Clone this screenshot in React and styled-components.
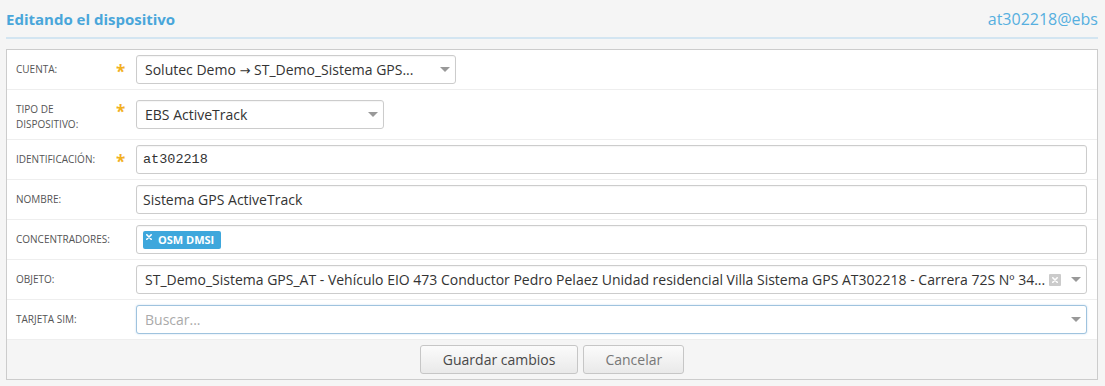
import React from 'react';
import styled, { createGlobalStyle } from 'styled-components';

const GlobalStyle = createGlobalStyle`
  html, body {
    margin: 0;
    padding: 0;
    background: #f5f5f5;
  }
  body {
    font-family: "Open Sans", "Liberation Sans", sans-serif;
  }
  * {
    box-sizing: border-box;
  }
`;

const Page = styled.div`
  width: 1092px;
  margin-left: 6px;
`;

const Header = styled.div`
  display: flex;
  justify-content: space-between;
  align-items: baseline;
  line-height: 20px;
  padding: 9px 0 8px;
  border-bottom: 2px solid #d3e5f1;
  margin-bottom: 10px;
`;

const Title = styled.h1`
  margin: 0;
  font-size: 15px;
  font-weight: 700;
  color: #49a6da;
`;

const User = styled.span`
  font-size: 16px;
  color: #56afdf;
`;

const Panel = styled.div`
  border: 1px solid #ccc;
  background: #fff;
`;

const Row = styled.div`
  display: grid;
  grid-template-columns: 100px 20px 1fr;
  align-items: center;
  min-height: 40px;
  padding: 0 10px 0 9px;
  border-bottom: 1px solid #eee;
`;

const Label = styled.label`
  align-self: start;
  padding: 12px 0 7px;
  font-size: 10px;
  line-height: 15px;
  text-transform: uppercase;
  color: #555;
`;

const Star = styled.span`
  align-self: start;
  padding-top: 13px;
  font-size: 17px;
  line-height: 17px;
  font-weight: 700;
  color: #f2b01e;
`;

const Field = styled.div`
  display: flex;
  align-items: center;
  width: ${(p) => p.$width || '100%'};
  height: 29px;
  padding: 0 ${(p) => (p.$select ? '5px' : '6px')} 0 ${(p) => (p.$select ? '8px' : '6px')};
  border: 1px solid ${(p) => (p.$focus ? '#9fc3de' : '#ccc')};
  border-radius: 3px;
  background: #fff;
  box-shadow: ${(p) =>
    p.$focus ? '0 0 2px rgba(82, 150, 210, 0.35)' : 'inset 0 1px 1px rgba(0, 0, 0, 0.04)'};
  font-size: 14px;
  color: #333;
`;

const Value = styled.span`
  flex: 1;
  min-width: 0;
  white-space: nowrap;
  overflow: hidden;
  font-family: ${(p) => (p.$mono ? '"Liberation Mono", monospace' : 'inherit')};
  font-size: ${(p) => (p.$mono ? '13.5px' : 'inherit')};
  color: ${(p) => (p.$placeholder ? '#aaa' : '#333')};
`;

const LongArrow = styled.span`
  font-family: "DejaVu Sans", sans-serif;
  font-size: 13px;
`;

const Arrow = styled.span`
  flex: none;
  width: 0;
  height: 0;
  margin-left: ${(p) => p.$gap || '8px'};
  border-left: 5px solid transparent;
  border-right: 5px solid transparent;
  border-top: 5px solid #999;
`;

const Clear = styled.span`
  flex: none;
  display: flex;
  align-items: center;
  justify-content: center;
  width: 12px;
  height: 12px;
  margin-left: 4px;
  border-radius: 1px;
  background: #cbcbcb;
`;

const Tag = styled.span`
  display: inline-flex;
  align-items: flex-start;
  height: 18px;
  padding: 0 7px 0 3px;
  border-radius: 2px;
  background: #3ea7dc;
  color: #fff;
  font-size: 11px;
  font-weight: 700;
  line-height: 18px;
`;

const TagClose = styled.span`
  display: flex;
  padding-top: 3px;
  margin-right: 6px;
`;

const Footer = styled.div`
  display: flex;
  justify-content: center;
  align-items: center;
  gap: 5px;
  height: 39px;
  background: #f5f5f5;
`;

const Button = styled.button`
  height: 29px;
  padding: 0 ${(p) => (p.$primary ? '22px' : '21px')};
  border: 1px solid #c6c6c6;
  border-radius: 3px;
  background: linear-gradient(#fbfbfb, #e9e9e9);
  font-family: "Open Sans", "Liberation Sans", sans-serif;
  font-size: 14px;
  color: ${(p) => (p.$primary ? '#484848' : '#777')};
`;

const Cross = ({ size = 6 }) => (
  <svg width={size} height={size} viewBox="0 0 6 6">
    <path d="M0.8 0.8 L5.2 5.2 M5.2 0.8 L0.8 5.2" stroke="#fff" strokeWidth="1.6" strokeLinecap="round" />
  </svg>
);

const objeto =
  'ST_Demo_Sistema GPS_AT - Vehículo EIO 473 Conductor Pedro Pelaez Unidad residencial Villa Sistema GPS AT302218 - Carrera 72S Nº 34...';

export default function App() {
  return (
    <>
      <GlobalStyle />
      <Page>
        <Header>
          <Title>Editando el dispositivo</Title>
          <User>at302218@ebs</User>
        </Header>
        <Panel>
          <Row>
            <Label>Cuenta:</Label>
            <Star>*</Star>
            <Field $select $width="320px">
              <Value>
                Solutec Demo <LongArrow>→</LongArrow> ST_Demo_Sistema GPS...
              </Value>
              <Arrow />
            </Field>
          </Row>
          <Row>
            <Label>
              Tipo de
              <br />
              dispositivo:
            </Label>
            <Star>*</Star>
            <Field $select $width="248px">
              <Value>EBS ActiveTrack</Value>
              <Arrow />
            </Field>
          </Row>
          <Row>
            <Label>Identificación:</Label>
            <Star>*</Star>
            <Field>
              <Value $mono>at302218</Value>
            </Field>
          </Row>
          <Row>
            <Label>Nombre:</Label>
            <span />
            <Field>
              <Value>Sistema GPS ActiveTrack</Value>
            </Field>
          </Row>
          <Row>
            <Label>Concentradores:</Label>
            <span />
            <Field>
              <Tag>
                <TagClose>
                  <Cross size={6} />
                </TagClose>
                OSM DMSI
              </Tag>
            </Field>
          </Row>
          <Row>
            <Label>Objeto:</Label>
            <span />
            <Field $select>
              <Value>{objeto}</Value>
              <Clear>
                <Cross size={6} />
              </Clear>
              <Arrow $gap="10px" />
            </Field>
          </Row>
          <Row>
            <Label>Tarjeta SIM:</Label>
            <span />
            <Field $select $focus>
              <Value $placeholder>Buscar...</Value>
              <Arrow />
            </Field>
          </Row>
          <Footer>
            <Button $primary>Guardar cambios</Button>
            <Button>Cancelar</Button>
          </Footer>
        </Panel>
      </Page>
    </>
  );
}
